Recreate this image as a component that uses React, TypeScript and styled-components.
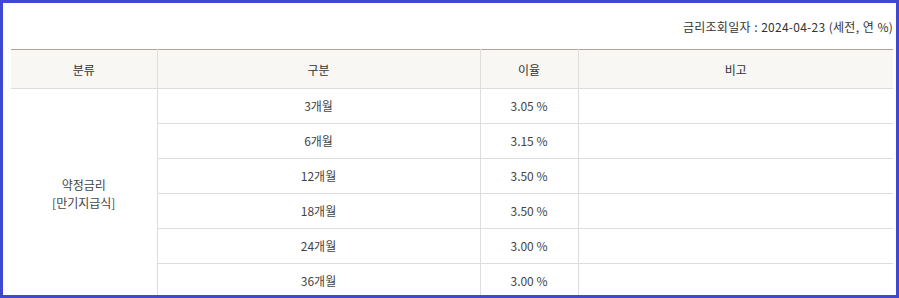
import React from 'react';
import styled, { createGlobalStyle } from 'styled-components';

const GlobalStyle = createGlobalStyle`
    html, body {
        margin: 0;
        padding: 0;
        background: #ffffff;
    }
    body {
        font-family: 'Noto Sans CJK KR', 'Noto Sans', sans-serif;
    }
`;

const Frame = styled.div`
    box-sizing: border-box;
    width: 899px;
    height: 298px;
    border: 3px solid #3f48cf;
    overflow: hidden;
    padding: 0 3px 0 8px;
    background: #ffffff;
`;

const Caption = styled.div`
    height: 46px;
    display: flex;
    align-items: center;
    justify-content: flex-end;
    font-size: 12px;
    color: #333333;
    letter-spacing: 0.25px;
    word-spacing: 0.5px;
`;

const Table = styled.table`
    width: 100%;
    border-collapse: collapse;
    table-layout: fixed;
    border-top: 1px solid #b3a596;
    font-size: 12px;
`;

const HeadCell = styled.th`
    height: 38px;
    padding: 0;
    background: #f8f7f4;
    color: #333333;
    font-weight: normal;
    text-align: center;
    border-left: 1px solid #dddddd;
    border-bottom: 1px solid #dddddd;
    &:first-child {
        border-left: none;
    }
`;

const Cell = styled.td<{ $first?: boolean }>`
    height: 34px;
    padding: 0;
    color: #444444;
    text-align: center;
    line-height: 18px;
    border-left: ${props => (props.$first ? 'none' : '1px solid #dddddd')};
    border-bottom: 1px solid #dddddd;
`;

interface RateRow {
    term: string;
    rate: string;
}

const rows: RateRow[] = [
    { term: '3개월', rate: '3.05 %' },
    { term: '6개월', rate: '3.15 %' },
    { term: '12개월', rate: '3.50 %' },
    { term: '18개월', rate: '3.50 %' },
    { term: '24개월', rate: '3.00 %' },
    { term: '36개월', rate: '3.00 %' },
];

const App = () => {
    return (
        <Frame>
            <GlobalStyle />
            <Caption>금리조회일자 : 2024-04-23 (세전, 연 %)</Caption>
            <Table>
                <colgroup>
                    <col style={{ width: '146px' }} />
                    <col style={{ width: '323px' }} />
                    <col style={{ width: '98px' }} />
                    <col />
                </colgroup>
                <thead>
                    <tr>
                        <HeadCell>분류</HeadCell>
                        <HeadCell>구분</HeadCell>
                        <HeadCell>이율</HeadCell>
                        <HeadCell>비고</HeadCell>
                    </tr>
                </thead>
                <tbody>
                    {rows.map((row, i) => (
                        <tr key={row.term}>
                            {i === 0 && (
                                <Cell $first rowSpan={rows.length}>
                                    약정금리
                                    <br />
                                    [만기지급식]
                                </Cell>
                            )}
                            <Cell>{row.term}</Cell>
                            <Cell>{row.rate}</Cell>
                            <Cell></Cell>
                        </tr>
                    ))}
                </tbody>
            </Table>
        </Frame>
    );
};

export default App;
